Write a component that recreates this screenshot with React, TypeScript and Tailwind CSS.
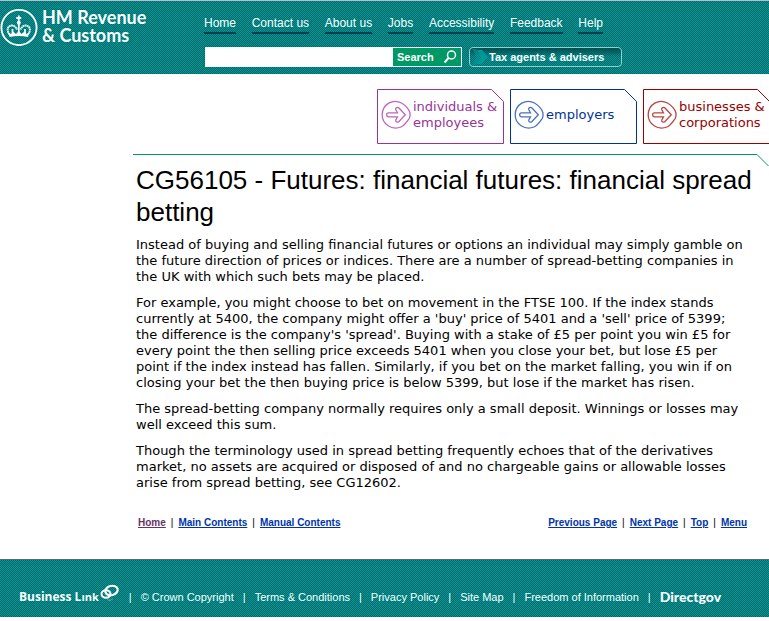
const navLinks = ["Home", "Contact us", "About us", "Jobs", "Accessibility", "Feedback", "Help"];

const sections = [
  { label: "individuals & employees", text: "text-[#993399]", icon: "text-[#bb66bb]" },
  { label: "employers", text: "text-[#003399]", icon: "text-[#4a72b8]" },
  { label: "businesses & corporations", text: "text-[#990000]", icon: "text-[#bb4444]" },
];

const footerLinks = [
  "© Crown Copyright",
  "Terms & Conditions",
  "Privacy Policy",
  "Site Map",
  "Freedom of Information",
];

const CrownLogo = () => (
  <svg viewBox="0 0 38 38" className="h-[38px] w-[38px] shrink-0" fill="none" stroke="white" aria-hidden="true">
    <circle cx="19" cy="19.500" r="17.600" strokeWidth="1.900" />
    <path d="M8.500 24.500 L11 26 L13 23.500 L16 26 L18.800 23 L21.500 26 L24.500 23.500 L26.500 26 L29 24.500 L28 29 Q18.800 27 9.500 29 Z" fill="white" stroke="none" />
    <path d="M9.500 26.500 C7.500 24 6.800 20.500 9 18.500 C12 16.200 15.500 18 17 21.500 M28 26.500 C30 24 30.700 20.500 28.500 18.500 C25.500 16.200 22 18 20.500 21.500" strokeWidth="1.900" strokeDasharray="1.800 0.400" />
    <path d="M18.800 16 V25 M12.500 21 V25 M25 21 V25" strokeWidth="1.700" />
    <path d="M18.800 7.500 V13 M16.300 10 H21.300" strokeWidth="1.800" />
    <circle cx="18.800" cy="14.800" r="2" fill="white" stroke="none" />
  </svg>
);

const ArrowIcon = ({ className }: { className: string }) => (
  <svg viewBox="0 0 30 30" className={`h-[30px] w-[30px] shrink-0 ${className}`} fill="none" stroke="currentColor" aria-hidden="true">
    <path d="M20.500 3 C12 -1.500 1.500 4 1.200 14.500 C1 24.500 11 30.500 20 27 C23.500 25.600 25.500 22.500 28.200 18.500 Q29.500 16 28.800 12.500 C28.400 9.500 24 5 20.500 3 Z" strokeWidth="1.300" />
    <path d="M7.500 12.800 H16.500 L14.700 9.500 C14.200 7.800 16.500 6.500 18 8 L24.300 14.800 L18 21.500 C16.500 23 14.200 21.800 14.800 20 L16.500 16.800 H7.500 C5 16.800 5 12.800 7.500 12.800 Z" strokeWidth="1.300" />
  </svg>
);

const LinkRings = () => (
  <svg viewBox="0 0 20 18" className="mb-2 ml-px h-[18px] w-5" fill="none" stroke="white" aria-hidden="true">
    <ellipse cx="11.500" cy="6.500" rx="6.300" ry="4.600" transform="rotate(-15 11.500 6.500)" strokeWidth="2.200" />
    <ellipse cx="6" cy="10" rx="4.500" ry="3.800" strokeWidth="2" />
    <path d="M7 15.500 L10 16.500 L13 14.500" stroke="#669999" strokeWidth="1.300" />
  </svg>
);

const App = () => {
  return (
    <div className="overflow-x-hidden bg-white pb-1 font-['Liberation_Sans',Arial,sans-serif] text-black">
      <header className="flex h-[74px] border-t border-[#bbbbcc] bg-[repeating-conic-gradient(#009999_0_25%,#006666_0_50%)] bg-[length:2px_2px] text-white">
        <a href="#" className="flex w-[204px] shrink-0 items-start pt-[7px]">
          <CrownLogo />
          <span className="ml-1 flex flex-col font-['Lato',sans-serif] text-[18px] leading-[18px] font-bold whitespace-nowrap">
            <span>HM Revenue</span>
            <span>&amp; Customs</span>
          </span>
        </a>
        <div className="w-[418px] pt-[14px]">
          <nav className="flex w-[399px] justify-between text-[12px] leading-4">
            {navLinks.map((link) => (
              <a key={link} href="#" className="border-b-2 border-[#003d4d] pb-px whitespace-nowrap">{link}</a>
            ))}
          </nav>
          <div className="mt-[13px] flex h-5 pl-px text-[11px] font-bold">
            <input type="text" aria-label="Search HMRC" className="w-[187px] bg-white px-1 text-black outline-none" />
            <button type="button" className="flex w-[70px] items-center justify-between border border-white bg-[#009966] px-1">
              Search
              <svg viewBox="0 0 14 14" className="h-[14px] w-[14px]" fill="none" stroke="white" strokeWidth="1.500" aria-hidden="true">
                <circle cx="8.500" cy="5" r="4" />
                <path d="M5.500 8 L1.500 12.500" strokeWidth="2" />
              </svg>
            </button>
            <button type="button" className="ml-[7px] flex flex-1 items-center rounded-sm border border-[#99cccc] bg-linear-to-b from-[#004d4d] to-transparent to-50%">
              <svg viewBox="0 0 18 18" className="h-[18px] w-[18px]" fill="#009999" aria-hidden="true">
                <path d="M2 1 H6 L12 9 L6 17 H2 L7 9 Z" opacity="0.600" />
                <path d="M7 2 H12 L18 9 L12 16 H7 L11 9 Z" />
              </svg>
              <span className="ml-px whitespace-nowrap">Tax agents &amp; advisers</span>
            </button>
          </div>
        </div>
      </header>

      <nav className="-mr-px flex justify-end gap-[6px] pt-[15px] font-['DejaVu_Sans',Verdana,sans-serif] text-[13px] leading-4">
        {sections.map(({ label, text, icon }) => (
          <a key={label} href="#" className={`relative flex h-[55px] w-[127px] items-center pb-1 pl-1 ${text}`}>
            <svg viewBox="0 0 127 55" className="absolute inset-0 h-full w-full" fill="none" stroke="currentColor" aria-hidden="true">
              <path d="M0.500 0.500 H114.500 L126.500 12.500 V54.500 H0.500 Z" />
            </svg>
            <ArrowIcon className={icon} />
            <span className="ml-[2px] w-[90px]">{label}</span>
          </a>
        ))}
      </nav>

      <main className="ml-[133px] pt-[10px]">
        <div className="flex text-[#009966]">
          <div className="flex-1 border-t border-current" />
          <svg viewBox="0 0 12 12" className="h-3 w-3" fill="none" stroke="currentColor" aria-hidden="true">
            <path d="M0 0.500 L12 12.500" />
          </svg>
        </div>
        <article className="mr-6 ml-[3px] font-['DejaVu_Sans',Verdana,sans-serif] text-[13px] leading-4">
          <h1 className="-mt-0.5 -mr-3 font-['Liberation_Sans',Arial,sans-serif] text-[26px] leading-8">
            CG56105 - Futures: financial futures: financial spread betting
          </h1>
          <p className="mt-[9px]">
            Instead of buying and selling financial futures or options an individual may simply gamble on the future direction of prices or indices. There are a number of spread-betting companies in the UK with which such bets may be placed.
          </p>
          <p className="mt-[10px]">
            For example, you might choose to bet on movement in the FTSE 100. If the index stands currently at 5400, the company might offer a 'buy' price of 5401 and a 'sell' price of 5399; the difference is the company's 'spread'. Buying with a stake of £5 per point you win £5 for every point the then selling price exceeds 5401 when you close your bet, but lose £5 per point if the index instead has fallen. Similarly, if you bet on the market falling, you win if on closing your bet the then buying price is below 5399, but lose if the market has risen.
          </p>
          <p className="mt-[10px]">
            The spread-betting company normally requires only a small deposit. Winnings or losses may well exceed this sum.
          </p>
          <p className="mt-[10px]">
            Though the terminology used in spread betting frequently echoes that of the derivatives market, no assets are acquired or disposed of and no chargeable gains or allowable losses arise from spread betting, see CG12602.
          </p>
        </article>

        <div className="mr-[22px] ml-[5px] flex justify-between pt-6 pb-7 text-[10px] leading-4 font-bold text-[#0033aa]">
          <div className="flex gap-[5px]">
            <a href="#" className="text-[#663366] underline">Home</a>
            <span className="font-normal text-black">|</span>
            <a href="#" className="underline">Main Contents</a>
            <span className="font-normal text-black">|</span>
            <a href="#" className="underline">Manual Contents</a>
          </div>
          <div className="flex gap-[5px]">
            <a href="#" className="underline">Previous Page</a>
            <span className="font-normal text-black">|</span>
            <a href="#" className="underline">Next Page</a>
            <span className="font-normal text-black">|</span>
            <a href="#" className="underline">Top</a>
            <span className="font-normal text-black">|</span>
            <a href="#" className="underline">Menu</a>
          </div>
        </div>
      </main>

      <footer className="flex h-[58px] items-center gap-[9px] border-t border-[#666666] bg-[repeating-conic-gradient(#009999_0_25%,#006666_0_50%)] bg-[length:2px_2px] bg-[position:1px_0] pt-4 pl-[19px] text-[11px] leading-4 whitespace-nowrap text-white">
        <a href="#" className="flex items-center font-['Open_Sans','Noto_Sans',sans-serif] text-[12px] font-bold">
          <span>Business L<span className="text-[11px]">ınk</span></span>
          <LinkRings />
        </a>
        <span>|</span>
        {footerLinks.map((link) => (
          <div key={link} className="flex gap-[9px]">
            <a href="#">{link}</a>
            <span>|</span>
          </div>
        ))}
        <a href="#" className="font-['Lato',sans-serif] text-[14px] font-black">Directgov</a>
      </footer>
    </div>
  );
};

export default App;
